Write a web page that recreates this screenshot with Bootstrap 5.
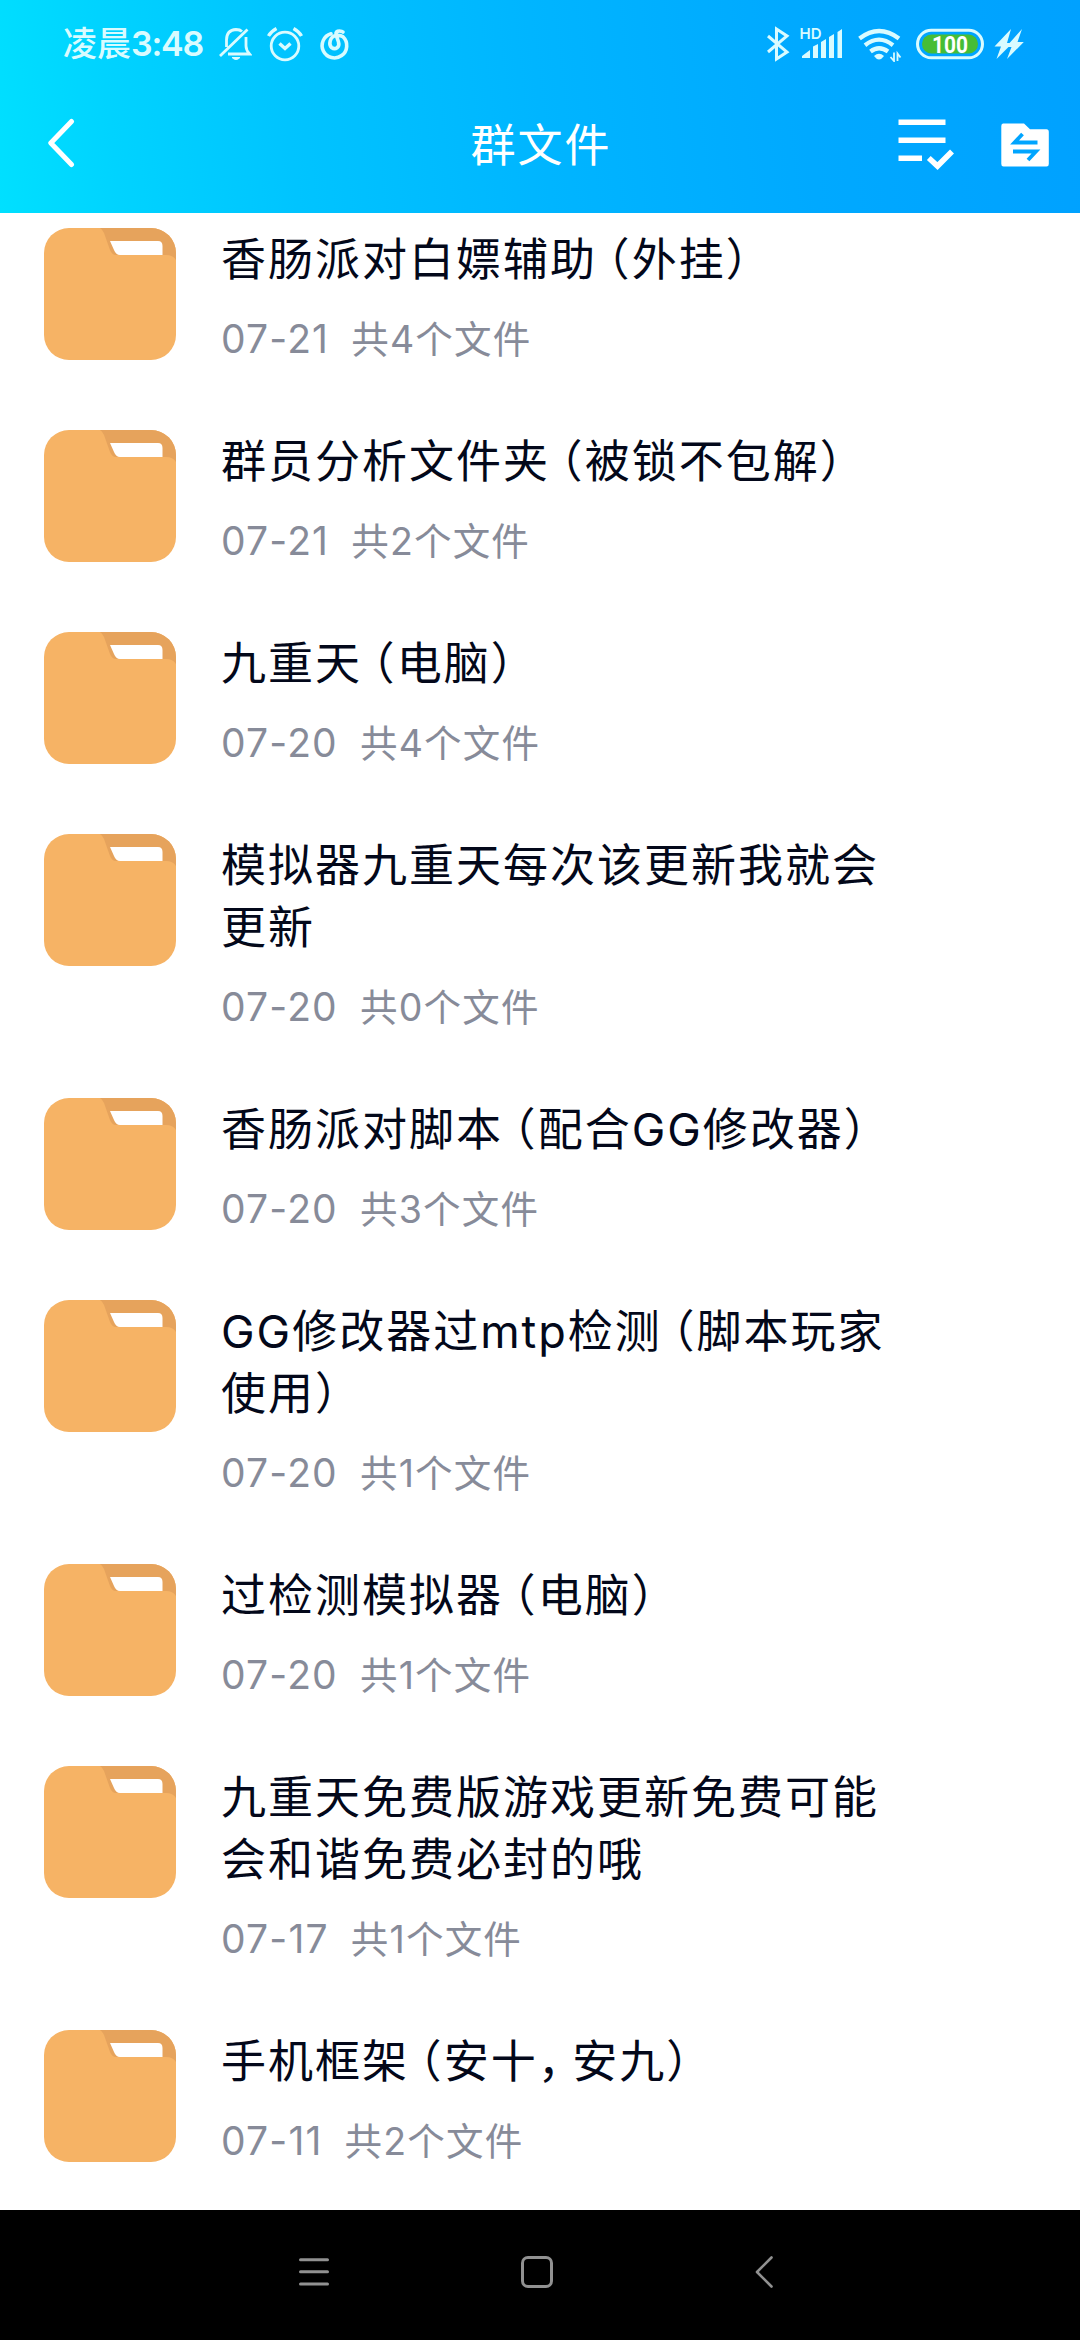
<!DOCTYPE html>
<html lang="zh-CN">
<head>
<meta charset="utf-8">
<meta name="viewport" content="width=device-width, initial-scale=1">
<title>群文件</title>
<link rel="stylesheet" href="https://cdn.jsdelivr.net/npm/bootstrap@5.3.0/dist/css/bootstrap.min.css">
<style>
  body { font-family: Inter, "Noto Sans CJK SC", sans-serif; background: #fff; }
  .screen { width: 1080px; height: 2340px; overflow: hidden; }
  .app-head { height: 213px; background: linear-gradient(83deg, #00e0ff 0%, #00d3ff 11%, #00c4ff 27%, #00b5ff 50%, #00a9ff 74%, #00a1ff 100%); color: #fff; }
  .status-bar { height: 88px; padding: 0 56px 0 63px; color: #d9fbff; }
  .clock { width: 155px; font-size: 34px; line-height: 36px; font-weight: 500; white-space: nowrap; }
  .clock .hm { font-weight: 600; letter-spacing: -1.2px; }
  .status-bar svg, .title-bar svg, .sys-nav svg { display: block; flex: none; }
  .gap-14 { gap: 14px; }
  .gap-10 { gap: 10px; }
  .title-bar { height: 110px; padding: 0 30px; }
  .title-bar h1 { font-size: 45px; letter-spacing: 2px; font-weight: 400; line-height: 60px; padding: 5px 0 0 2px; }
  .back-arrow { margin-left: 18px; }
  .head-actions { gap: 45px; padding-top: 2px; }
  .folder-list { height: 1997px; overflow: hidden; padding: 15px 0 0 44px; }
  .folder-row { gap: 45px; padding-bottom: 67px; }
  .folder-row > svg { flex: none; width: 132px; height: 132px; margin-bottom: -20px; display: block; }
  .folder-name { width: 675px; padding-top: 1px; font-size: 45px; letter-spacing: 2px; line-height: 62px; color: #03081a; }
  .folder-meta { height: 48px; margin-top: 24px; font-size: 37.5px; line-height: 48px; letter-spacing: 1.2px; color: #878b99; white-space: nowrap; }
  .day { margin-right: 22px; font-size: 39px; }
  .po, .cm { font-feature-settings: "halt"; }
  .po { margin-left: 10.1px; }
  .cm { margin-right: 10.1px; }
  .sys-nav { height: 130px; background: #000; padding: 0 0 6px 297px; }
  .nav-home { margin-left: 189px; }
  .nav-back { margin-left: 200px; }
</style>
</head>
<body>
<svg width="0" height="0" class="position-absolute" aria-hidden="true">
  <symbol id="folder" viewBox="0 0 132 132">
    <rect width="132" height="132" rx="25" fill="#f6b365"/>
    <path d="M56 0H107A25 25 0 0 1 132 25V32Q129 27 122 27H72Q68 27 66 22L60 5Q58 1 56 0Z" fill="#e6a35c"/>
    <path d="M66 13H114Q118.500 13 118.500 18V27H76Q72 27 70 22Z" fill="#fff"/>
  </symbol>
</svg>
<div class="screen d-flex flex-column">
  <header class="app-head flex-shrink-0">
    <div class="status-bar d-flex align-items-center">
      <div class="clock">凌晨<span class="hm">3:48</span></div>
      <div class="d-flex align-items-center gap-14">
        <svg width="34" height="36" viewBox="218 26 34 36" fill="none" stroke="#d9fbff" stroke-width="2.800">
          <path d="M226.500 47V40Q226.500 30 236 29.500Q240 29.500 242 31.500M246 37V46Q246 50 249.500 54H228M220 56L247.500 29.500"/><path d="M232 57.500H240Q236 61.500 232 57.500Z" fill="#d9fbff" stroke-width="1"/>
        </svg>
        <svg width="38" height="36" viewBox="266 26 38 36" fill="none" stroke="#d9fbff" stroke-width="2.800">
          <circle cx="285" cy="46" r="13.800"/><path d="M279.500 43.500L285 48.500L290.500 43.500M268.500 36Q271 31.500 276.500 28.500M293.500 28.500Q299 31.500 301.500 36" stroke-width="3.400"/>
        </svg>
        <svg width="34" height="36" viewBox="318 26 34 36" fill="none" stroke="#d9fbff" stroke-width="3.600" stroke-linecap="round">
          <path d="M331 33.800A12.300 12.300 0 1 0 343 36.800Q340.500 35 336 35.500C329.500 36.500 328.500 45 331.500 47.500C335.500 50.500 340 47 338.500 42L336 34.500Q335.500 31 339.500 31Q342 31 343 32"/>
        </svg>
      </div>
      <div class="d-flex align-items-center gap-10 ms-auto">
        <svg width="24" height="36" viewBox="766 26 24 36" fill="none" stroke="#d9fbff" stroke-width="3"><path d="M768 36L787 52L776.500 59V29L787 36L768 52"/></svg>
        <div class="d-flex align-items-center gap-14">
          <svg width="44" height="36" viewBox="800 26 44 36" fill="#d9fbff">
            <text x="799.500" y="38.700" font-size="15" font-weight="600" font-family="Inter, sans-serif">HD</text>
            <path d="M802 58V56L810 50V58ZM813 58V46.500L818 44V58ZM821 58V42L826 39V58ZM829 58V37L834 34V58ZM837.500 58V32L842 29V58Z"/>
          </svg>
          <svg width="44" height="36" viewBox="858 26 44 36" fill="none" stroke="#d9fbff" stroke-width="4.300">
            <path d="M859.500 38.500Q879 23.500 899 38.500M865 45.200Q879 34 893 45.200M870.500 51.500Q879 45 888 51.500"/>
            <path d="M874 56Q879 51.500 884 56Q881.500 59.500 879 59.500Q876.500 59.500 874 56Z" fill="#d9fbff" stroke="none"/>
            <path d="M894 52.500V61L890.500 57M897.500 61V53.500L900.500 57.500" stroke-width="1.800"/>
          </svg>
          <svg width="68" height="36" viewBox="916 26 68 36">
            <rect x="917.500" y="30.200" width="65" height="27.600" rx="13.800" fill="none" stroke="#d9fbff" stroke-width="3"/>
            <rect x="922" y="34.500" width="56" height="19" rx="9.500" fill="#46bd35"/>
            <text x="950" y="52.500" text-anchor="middle" textLength="36" lengthAdjust="spacingAndGlyphs" font-size="24" font-weight="700" fill="#fff" font-family="Roboto, sans-serif">100</text>
          </svg>
        </div>
        <svg width="30" height="36" viewBox="994 26 30 36" fill="#d9fbff"><path d="M1011 29L994.500 46.500H1001L996.500 59L1012.500 43H1007ZM1022 29L1006 47H1011.500L1007 59L1023.800 42H1017.500Z"/></svg>
      </div>
    </div>
    <nav class="title-bar d-flex align-items-center">
      <div class="col"><svg class="back-arrow" width="28" height="52" viewBox="48 117 28 52" fill="none" stroke="#fff" stroke-width="5" stroke-linecap="round" stroke-linejoin="round"><path d="M71.500 121.500L50.800 143L71.500 164.500"/></svg></div>
      <h1 class="mb-0 flex-shrink-0">群文件</h1>
      <div class="head-actions col d-flex justify-content-end">
        <svg width="58" height="54" viewBox="897 117 58 54" fill="none" stroke="#fff" stroke-width="5.600"><path d="M898.500 122.300H945.500M898.500 140.300H945.500M898.500 158.200H922"/><path d="M928.800 158L937.500 166L952 151.500"/></svg>
        <svg width="50" height="54" viewBox="1000 117 50 54"><path d="M1003 123.500H1024L1030 129.300H1046.500Q1048.800 129.300 1048.800 132V164Q1048.800 166.500 1046.500 166.500H1003.500Q1001.300 166.500 1001.300 164V126Q1001.300 123.500 1003 123.500Z" fill="#fff"/><path d="M1037.500 142.500H1014.500L1022.500 134M1013 151.500H1036L1028 160" fill="none" stroke="#00a5ff" stroke-width="3.800"/></svg>
      </div>
    </nav>
  </header>
  <main class="folder-list flex-shrink-0">
    <div class="folder-row d-flex align-items-start"><svg><use href="#folder"/></svg><div><div class="folder-name">香肠派对白嫖辅助<span class="po">（</span>外挂）</div><div class="folder-meta"><span class="day">07-21</span>共4个文件</div></div></div>
    <div class="folder-row d-flex align-items-start"><svg><use href="#folder"/></svg><div><div class="folder-name">群员分析文件夹<span class="po">（</span>被锁不包解）</div><div class="folder-meta"><span class="day">07-21</span>共2个文件</div></div></div>
    <div class="folder-row d-flex align-items-start"><svg><use href="#folder"/></svg><div><div class="folder-name">九重天<span class="po">（</span>电脑）</div><div class="folder-meta"><span class="day">07-20</span>共4个文件</div></div></div>
    <div class="folder-row d-flex align-items-start"><svg><use href="#folder"/></svg><div><div class="folder-name">模拟器九重天每次该更新我就会更新</div><div class="folder-meta"><span class="day">07-20</span>共0个文件</div></div></div>
    <div class="folder-row d-flex align-items-start"><svg><use href="#folder"/></svg><div><div class="folder-name">香肠派对脚本<span class="po">（</span>配合GG修改器）</div><div class="folder-meta"><span class="day">07-20</span>共3个文件</div></div></div>
    <div class="folder-row d-flex align-items-start"><svg><use href="#folder"/></svg><div><div class="folder-name">GG修改器过mtp检测<span class="po">（</span>脚本玩家使用）</div><div class="folder-meta"><span class="day">07-20</span>共1个文件</div></div></div>
    <div class="folder-row d-flex align-items-start"><svg><use href="#folder"/></svg><div><div class="folder-name">过检测模拟器<span class="po">（</span>电脑）</div><div class="folder-meta"><span class="day">07-20</span>共1个文件</div></div></div>
    <div class="folder-row d-flex align-items-start"><svg><use href="#folder"/></svg><div><div class="folder-name">九重天免费版游戏更新免费可能会和谐免费必封的哦</div><div class="folder-meta"><span class="day">07-17</span>共1个文件</div></div></div>
    <div class="folder-row d-flex align-items-start"><svg><use href="#folder"/></svg><div><div class="folder-name">手机框架<span class="po">（</span>安十<span class="cm">，</span>安九）</div><div class="folder-meta"><span class="day">07-11</span>共2个文件</div></div></div>
  </main>
  <footer class="sys-nav d-flex align-items-center flex-shrink-0">
    <svg width="34" height="34" viewBox="297 2255 34 34" stroke="#919191" stroke-width="3" stroke-linecap="round"><path d="M300.500 2259.700H327.500M300.500 2271.700H327.500M300.500 2284H327.500"/></svg>
    <svg class="nav-home" width="34" height="34" viewBox="520 2255 34 34" fill="none" stroke="#919191" stroke-width="3"><rect x="522.500" y="2257.500" width="29" height="29" rx="5.500"/></svg>
    <svg class="nav-back" width="22" height="34" viewBox="754 2255 22 34" fill="none" stroke="#919191" stroke-width="2.600" stroke-linecap="round" stroke-linejoin="round"><path d="M771.500 2257.500L757 2272L771.500 2286.500"/></svg>
  </footer>
</div>
<script src="https://cdn.jsdelivr.net/npm/bootstrap@5.3.0/dist/js/bootstrap.bundle.min.js"></script>
</body>
</html>
